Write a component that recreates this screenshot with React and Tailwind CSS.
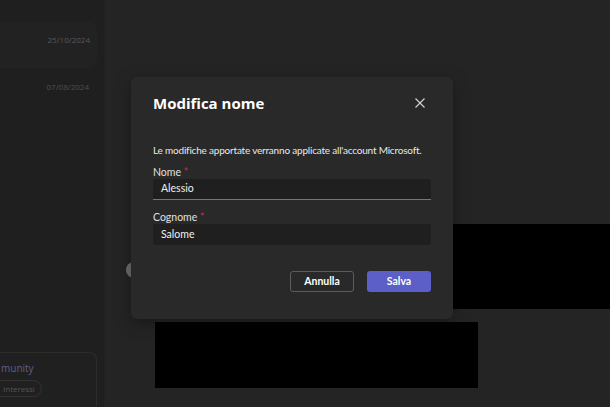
import React from "react";

export default function App() {
  const font = { fontFamily: '"Open Sans", "Noto Sans", sans-serif' };
  const body = { fontFamily: 'Lato, "Open Sans", sans-serif' };
  return (
    <div className="w-[610px] h-[407px] flex overflow-hidden bg-[#242424] relative" style={font}>
      {/* sidebar */}
      <div className="w-[105px] h-full bg-[#1f1f1f] border-r border-[#222222] flex flex-col overflow-hidden shrink-0">
        <div className="mt-[22px] ml-[-20px] w-[117px] h-[46px] rounded-lg bg-[#222222] flex justify-end pt-[14px] pr-[7px]">
          <span className="text-[8px] text-[#585858] leading-none">25/10/2024</span>
        </div>
        <div className="flex justify-end pr-[15px] mt-[15px]">
          <span className="text-[8px] text-[#4f4f4f] leading-none">07/08/2024</span>
        </div>
        <div className="mt-auto ml-[-20px] w-[117px] h-[55px] rounded-t-lg border border-b-0 border-[#2c2c2c] bg-[#202020] pt-[8px] flex flex-col gap-[5px]">
          <span className="ml-[20px] text-[10px] text-[#5f5e8a] leading-[14px]">munity</span>
          <span className="self-start ml-[8px] pl-[13px] pr-[6px] h-[17px] rounded-full border border-[#333333] text-[8px] text-[#555555] flex items-center">Interessi</span>
        </div>
      </div>

      {/* main */}
      <div className="flex-1 h-full relative flex flex-col pl-[50px] pt-[224px]">
        <div className="h-[85px] bg-black w-full" />
        <div className="mt-[13px] h-[66px] w-[323px] bg-black" />
        <div className="absolute left-[21px] top-[262px] w-[16px] h-[16px] rounded-full bg-[#6e6e6e]" />
      </div>

      {/* dialog */}
      <div className="absolute left-[131px] top-[77px] w-[322px] h-[242px] bg-[#292929] rounded-md shadow-[0_4px_16px_rgba(0,0,0,0.35)] px-[22px] pt-[16px] flex flex-col">
        <div className="flex items-center justify-between h-[20px]">
          <span className="text-[15px] font-bold text-white leading-none">Modifica nome</span>
          <svg width="12" height="12" viewBox="0 0 12 12" className="mr-[5px]">
            <path d="M1.5 1.5 L10.5 10.5 M10.5 1.5 L1.5 10.5" stroke="#d6d6d6" strokeWidth="1.1" fill="none" />
          </svg>
        </div>
        <div style={body} className="flex flex-col">
          <p className="mt-[30px] text-[10px] tracking-[-0.2px] text-[#e8e8e8] leading-[14px] whitespace-nowrap">
            Le modifiche apportate verranno applicate all'account Microsoft.
          </p>
          <div className="mt-[8px] text-[10.5px] text-[#e0e0e0] leading-[14px]">
            Nome <span className="text-[#c4314b]">*</span>
          </div>
          <div className="h-[21px] bg-[#1f1f1f] rounded-t-[3px] border-b border-[#6a6dc7] flex items-center px-[8px]">
            <span className="text-[10.5px] text-[#f0f0f0]">Alessio</span>
          </div>
          <div className="mt-[10px] text-[10.5px] text-[#e0e0e0] leading-[14px]">
            Cognome <span className="text-[#c4314b]">*</span>
          </div>
          <div className="h-[21px] bg-[#1f1f1f] rounded-[3px] flex items-center px-[8px]">
            <span className="text-[10.5px] text-[#f0f0f0]">Salome</span>
          </div>
          <div className="mt-[26px] flex justify-end gap-[13px]">
            <button className="w-[64px] h-[21px] rounded-[3px] border border-[#5c5c5c] text-[10.5px] font-bold text-white flex items-center justify-center">
              Annulla
            </button>
            <button className="w-[64px] h-[21px] rounded-[3px] bg-[#5b5fc7] text-[10.5px] font-bold text-white flex items-center justify-center">
              Salva
            </button>
          </div>
        </div>
      </div>
    </div>
  );
}
